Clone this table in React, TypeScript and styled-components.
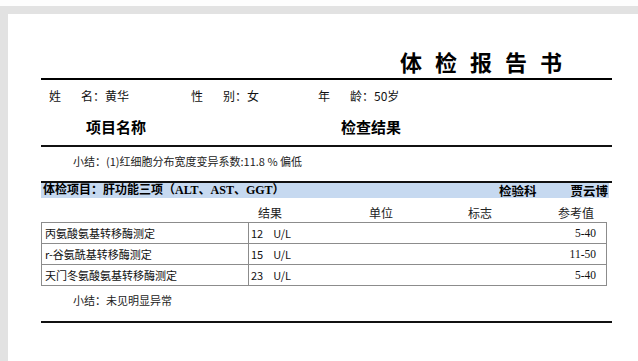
import React from "react";
import styled, { createGlobalStyle } from "styled-components";

const GlobalStyle = createGlobalStyle`
  html, body {
    margin: 0;
    padding: 0;
    background: #ffffff;
    font-family: "Noto Sans CJK SC", "Noto Sans", sans-serif;
    color: #000;
  }
`;

const Screen = styled.div`
  width: 638px;
  height: 361px;
  overflow: hidden;
  display: flex;
  flex-direction: column;
  background: #ffffff;
`;

const TopGap = styled.div`
  height: 6px;
  background: #fdfdfd;
`;

const Desk = styled.div`
  flex: 1;
  display: flex;
  padding: 8px 0 0 8px;
  background: #e2e2e2;
`;

const Sheet = styled.div`
  flex: 1;
  background: #ffffff;
  padding: 33px 0 0 33px;
`;

const Content = styled.div`
  width: 571px;
`;

const Title = styled.div`
  padding-left: 359px;
  height: 28px;
  line-height: 28px;
  padding-bottom: 3px;
  border-bottom: 2px solid #000;
  font-size: 22px;
  font-weight: 700;
  letter-spacing: 13px;
  white-space: nowrap;
`;

const InfoRow = styled.div`
  margin-top: 8px;
  padding-left: 8px;
  display: grid;
  grid-template-columns: 142px 127px 1fr;
  font-size: 12px;
  line-height: 16px;
  color: #111;
`;

const Field = styled.div`
  display: flex;
  white-space: nowrap;
`;

const Label = styled.span`
  width: 44px;
  display: inline-flex;
  justify-content: space-between;
`;

const HeadRow = styled.div`
  margin-top: 13px;
  padding-bottom: 8px;
  border-bottom: 2px solid #111;
  display: grid;
  grid-template-columns: 255px 1fr;
  padding-left: 45px;
  font-size: 15px;
  font-weight: 700;
  line-height: 20px;
`;

const Summary = styled.div<{ $top: number }>`
  margin-top: ${(p) => p.$top}px;
  padding-left: 32px;
  font-size: 11px;
  line-height: 14px;
  color: #222;
  white-space: pre;
`;

const Section = styled.div`
  margin-top: 13px;
  border-top: 2px solid #111;
`;

const Band = styled.div`
  margin-right: 3px;
  height: 15px;
  line-height: 15px;
  background: #c6d9f0;
  display: flex;
  justify-content: space-between;
  padding: 0 1px 0 2px;
  font-size: 12px;
  font-weight: 700;
  white-space: nowrap;
`;

const BandTitle = styled.span`
  font-family: "Liberation Serif", "Noto Sans CJK SC", serif;
`;

const BandRight = styled.span`
  display: flex;
  gap: 34px;
  font-size: 12.5px;
`;

const ColHead = styled.div`
  margin-top: 8px;
  display: grid;
  grid-template-columns: 157px 144px 78px 120px 72px;
  font-size: 12px;
  line-height: 14px;
  color: #222;
  text-align: center;
  white-space: nowrap;
`;

const Table = styled.div`
  margin-top: 2px;
  margin-right: 5px;
  border: 1px solid #8c8c8c;
`;

const Row = styled.div`
  display: grid;
  grid-template-columns: 207px 1fr 80px;
  height: 20px;
  line-height: 20px;
  font-size: 11px;
  color: #111;
  & + & {
    border-top: 1px solid #8c8c8c;
  }
`;

const Cell = styled.div<{ $divider?: boolean; $right?: boolean; $serif?: boolean }>`
  display: flex;
  gap: 10px;
  justify-content: ${(p) => (p.$right ? "flex-end" : "flex-start")};
  padding: ${(p) => (p.$right ? "0 10px 0 0" : p.$divider ? "0 0 0 3px" : "0 0 0 2px")};
  border-right: ${(p) => (p.$divider ? "1px solid #8c8c8c" : "none")};
  font-family: ${(p) =>
    p.$serif ? '"Liberation Serif", "Noto Sans CJK SC", serif' : "inherit"};
  font-size: ${(p) => (p.$serif ? "11.5px" : "11px")};
  white-space: nowrap;
  overflow: hidden;
`;

const BottomLine = styled.div`
  margin-top: 14px;
  border-top: 2px solid #111;
`;

const rows = [
  { name: "丙氨酸氨基转移酶测定", value: "12", unit: "U/L", range: "5-40" },
  { name: "r-谷氨酰基转移酶测定", value: "15", unit: "U/L", range: "11-50" },
  { name: "天门冬氨酸氨基转移酶测定", value: "23", unit: "U/L", range: "5-40" },
];

export default function App() {
  return (
    <>
      <GlobalStyle />
      <Screen>
        <TopGap />
        <Desk>
          <Sheet>
            <Content>
              <Title>体检报告书</Title>
              <InfoRow>
                <Field>
                  <Label>
                    <span>姓</span>
                    <span>名</span>
                  </Label>
                  ：黄华
                </Field>
                <Field>
                  <Label>
                    <span>性</span>
                    <span>别</span>
                  </Label>
                  ：女
                </Field>
                <Field>
                  <Label>
                    <span>年</span>
                    <span>龄</span>
                  </Label>
                  ：50岁
                </Field>
              </InfoRow>
              <HeadRow>
                <span>项目名称</span>
                <span>检查结果</span>
              </HeadRow>
              <Summary $top={7}>小结：(1)红细胞分布宽度变异系数:11.8 % 偏低</Summary>
              <Section>
                <Band>
                  <BandTitle>体检项目：肝功能三项（ALT、AST、GGT）</BandTitle>
                  <BandRight>
                    <span>检验科</span>
                    <span>贾云博</span>
                  </BandRight>
                </Band>
              </Section>
              <ColHead>
                <span />
                <span>结果</span>
                <span>单位</span>
                <span>标志</span>
                <span>参考值</span>
              </ColHead>
              <Table>
                {rows.map((r) => (
                  <Row key={r.name}>
                    <Cell $divider>{r.name}</Cell>
                    <Cell>
                      <span>{r.value}</span>
                      <span>{r.unit}</span>
                    </Cell>
                    <Cell $right $serif>
                      {r.range}
                    </Cell>
                  </Row>
                ))}
              </Table>
              <Summary $top={7}>小结：未见明显异常</Summary>
              <BottomLine />
            </Content>
          </Sheet>
        </Desk>
      </Screen>
    </>
  );
}
